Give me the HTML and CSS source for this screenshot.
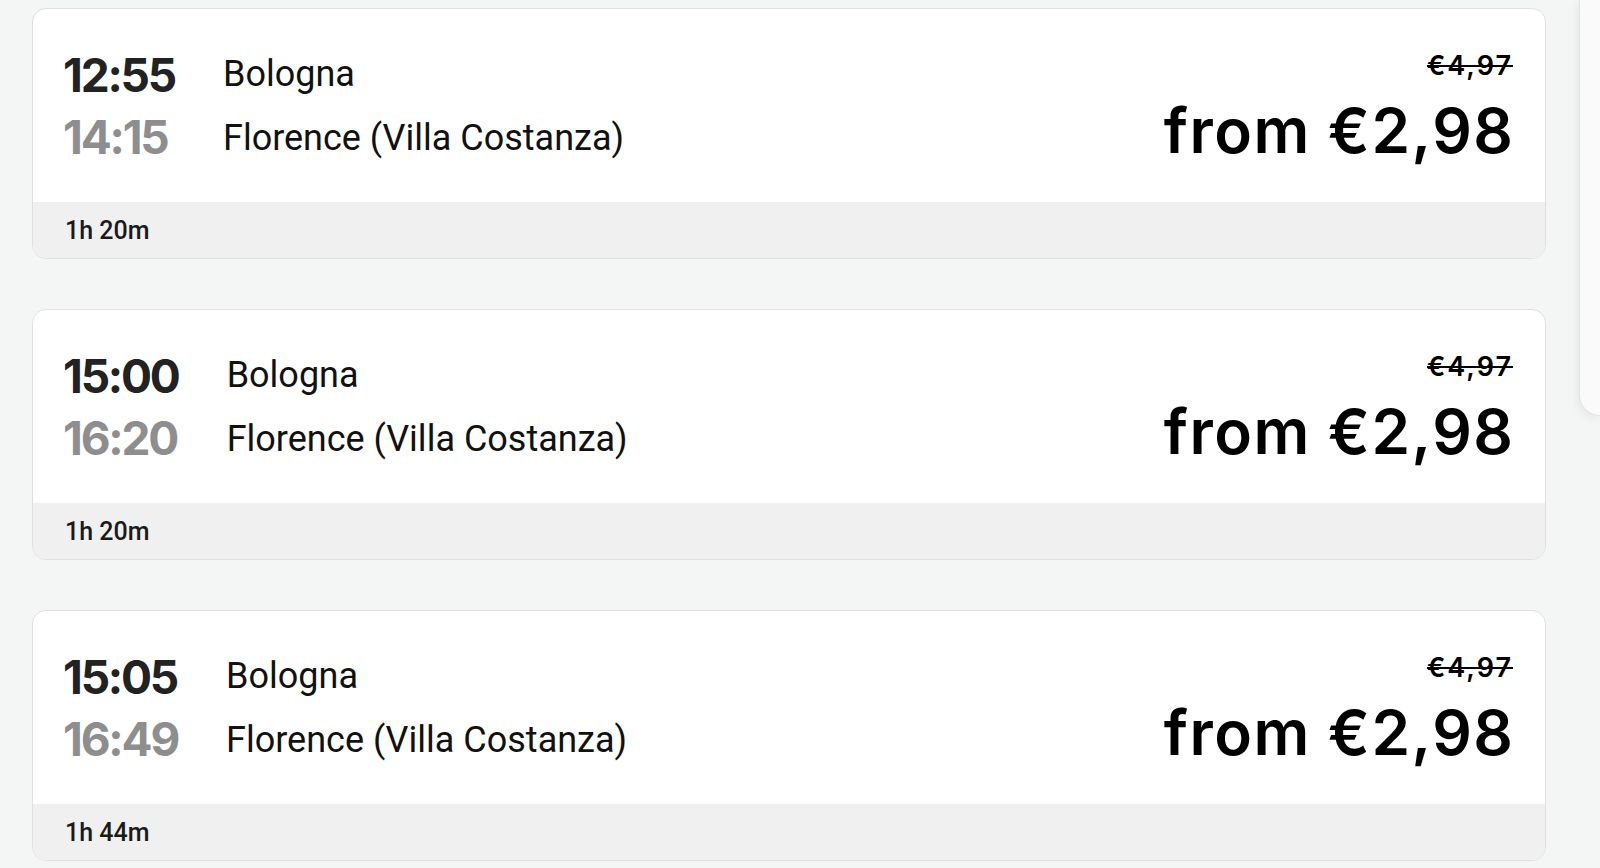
FILE: index.html
```html
<!DOCTYPE html>
<html lang="en">
<head>
<meta charset="utf-8">
<title>Bologna → Florence</title>
<link rel="stylesheet" href="styles.css">
</head>
<body>
<div class="page">
  <main class="results">
    <article class="trip">
      <div class="trip-main">
        <div class="times">
          <div class="dep">12:55</div>
          <div class="arr">14:15</div>
        </div>
        <div class="stations">
          <div>Bologna</div>
          <div>Florence (Villa Costanza)</div>
        </div>
        <div class="price">
          <div class="old">€4,97</div>
          <div class="now">from €2,98</div>
        </div>
      </div>
      <div class="trip-foot">1h 20m</div>
    </article>
    <article class="trip">
      <div class="trip-main">
        <div class="times">
          <div class="dep">15:00</div>
          <div class="arr">16:20</div>
        </div>
        <div class="stations">
          <div>Bologna</div>
          <div>Florence (Villa Costanza)</div>
        </div>
        <div class="price">
          <div class="old">€4,97</div>
          <div class="now">from €2,98</div>
        </div>
      </div>
      <div class="trip-foot">1h 20m</div>
    </article>
    <article class="trip">
      <div class="trip-main">
        <div class="times">
          <div class="dep">15:05</div>
          <div class="arr">16:49</div>
        </div>
        <div class="stations">
          <div>Bologna</div>
          <div>Florence (Villa Costanza)</div>
        </div>
        <div class="price">
          <div class="old">€4,97</div>
          <div class="now">from €2,98</div>
        </div>
      </div>
      <div class="trip-foot">1h 44m</div>
    </article>
  </main>
  <aside class="side"></aside>
</div>
</body>
</html>
```

FILE: styles.css
```css
html, body {
  margin: 0;
  padding: 0;
  background: #f4f5f5;
  overflow: hidden;
}
body {
  font-family: Roboto, "Liberation Sans", sans-serif;
  color: #111;
}
.page {
  display: flex;
  align-items: flex-start;
  gap: 33px;
}
.results {
  width: 1514px;
  margin-left: 32px;
  padding-top: 8px;
  display: flex;
  flex-direction: column;
  gap: 50px;
}
.trip {
  background: #fff;
  border: 1.5px solid #e0e0e0;
  border-radius: 14px;
  overflow: hidden;
  height: 251px;
  box-sizing: border-box;
  display: flex;
  flex-direction: column;
}
.trip-main {
  flex: 1;
  display: flex;
  align-items: flex-start;
  padding: 0 32px 0 30px;
  gap: 48px;
}
.times {
  margin-top: 35px;
  font-family: Inter, "DejaVu Sans", sans-serif;
  font-weight: 700;
  font-size: 46px;
  letter-spacing: -2.2px;
  line-height: 62px;
}
.dep { color: #222; }
.arr { color: #8e8e8e; }
.stations {
  flex: 1;
  margin-top: 33px;
  font-size: 36px;
  line-height: 64px;
  color: #111;
}
.price {
  margin-top: 42px;
  text-align: right;
  font-family: Inter, "DejaVu Sans", sans-serif;
  color: #000;
}
.old {
  font-size: 27px;
  font-weight: 600;
  letter-spacing: 2px;
  text-decoration: line-through;
  text-decoration-thickness: 2px;
  line-height: 30px;
}
.now {
  margin-top: 12px;
  font-size: 62px;
  font-weight: 600;
  line-height: 76px;
  letter-spacing: 1.5px;
  margin-right: -1.5px;
}
.trip-foot {
  height: 56px;
  flex: none;
  background: #f0f0f0;
  display: flex;
  align-items: center;
  padding-left: 32px;
  font-size: 25px;
  font-weight: 500;
  color: #1a1a1a;
}
.side {
  flex: 1;
  height: 415px;
  background: #fafafa;
  border: 1px solid #e2e2e2;
  border-top: none;
  border-right: none;
  border-bottom-left-radius: 26px;
  box-shadow: -2px 3px 10px rgba(0, 0, 0, 0.06);
}
```
